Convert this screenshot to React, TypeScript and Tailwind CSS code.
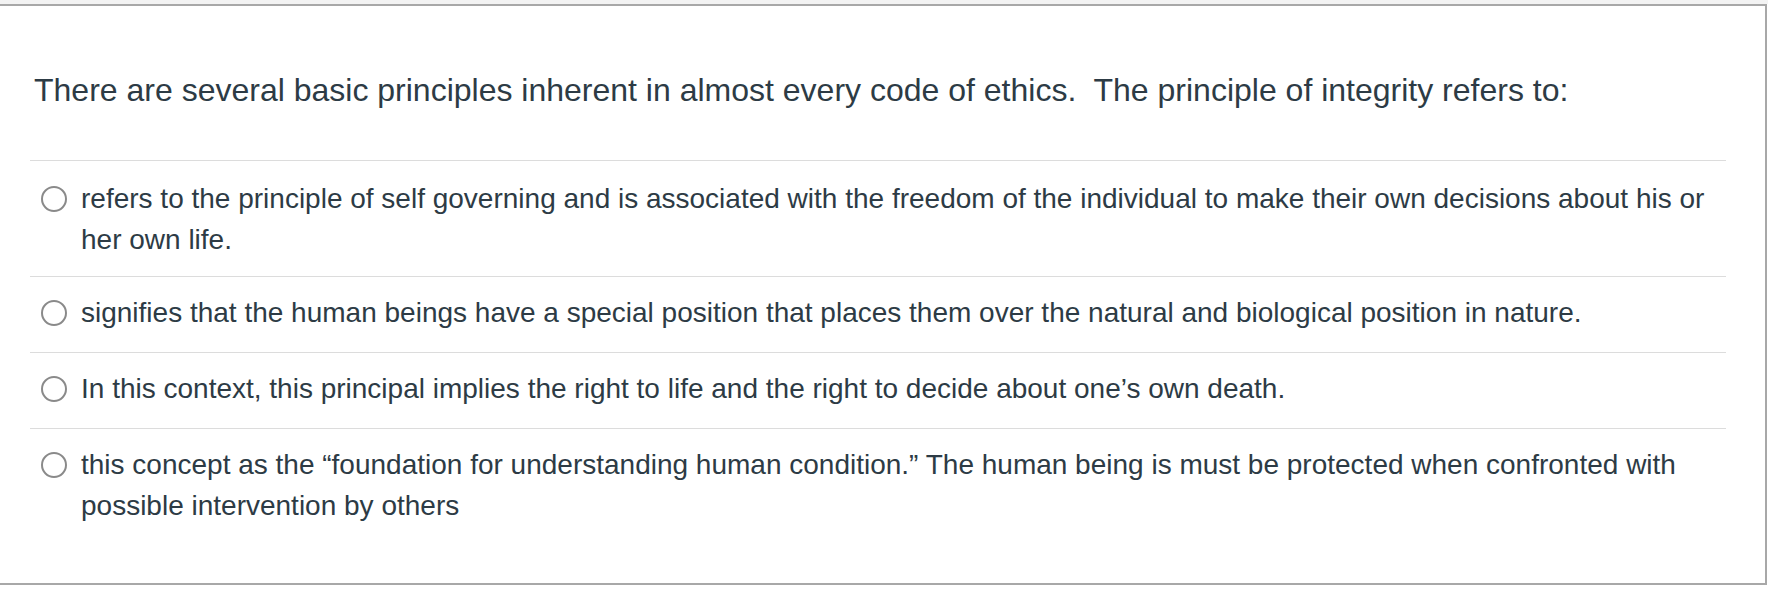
const options = [
  'refers to the principle of self governing and is associated with the freedom of the individual to make their own decisions about his or her own life.',
  'signifies that the human beings have a special position that places them over the natural and biological position in nature.',
  'In this context, this principal implies the right to life and the right to decide about one\u2019s own death.',
  'this concept as the \u201cfoundation for understanding human condition.\u201d The human being is must be protected when confronted with possible intervention by others',
];

export default function App() {
  return (
    <div className="h-[613px] w-[1768px] bg-white font-['Liberation_Sans',Arial,sans-serif] text-[#2d3b45]">
      <div className="h-[4px] bg-[#f3f3f3]" />
      <div className="h-[581px] w-[1767px] border-y-2 border-r-2 border-[#a8a8a8] bg-white pl-[30px] pr-[39px]">
        <div className="pl-[4px] pt-[60px] pb-[46px] text-[32px] leading-[48px]">
          There are several basic principles inherent in almost every code of ethics.{'\u00a0'} The principle of integrity refers to:
        </div>
        {options.map((text, i) => (
          <label
            key={i}
            className={
              i === 0
                ? 'flex items-start border-t border-[#dcdcdc] pt-[17px] pb-[16px]'
                : 'flex items-start border-t border-[#dcdcdc] pt-[15px] pb-[19px]'
            }
          >
            <span className="ml-[11px] mt-[8px] h-[26px] w-[26px] shrink-0 rounded-full border-2 border-[#8a8a8a] bg-white" />
            <span className="ml-[14px] text-[28px] leading-[41px]">{text}</span>
          </label>
        ))}
      </div>
    </div>
  );
}
